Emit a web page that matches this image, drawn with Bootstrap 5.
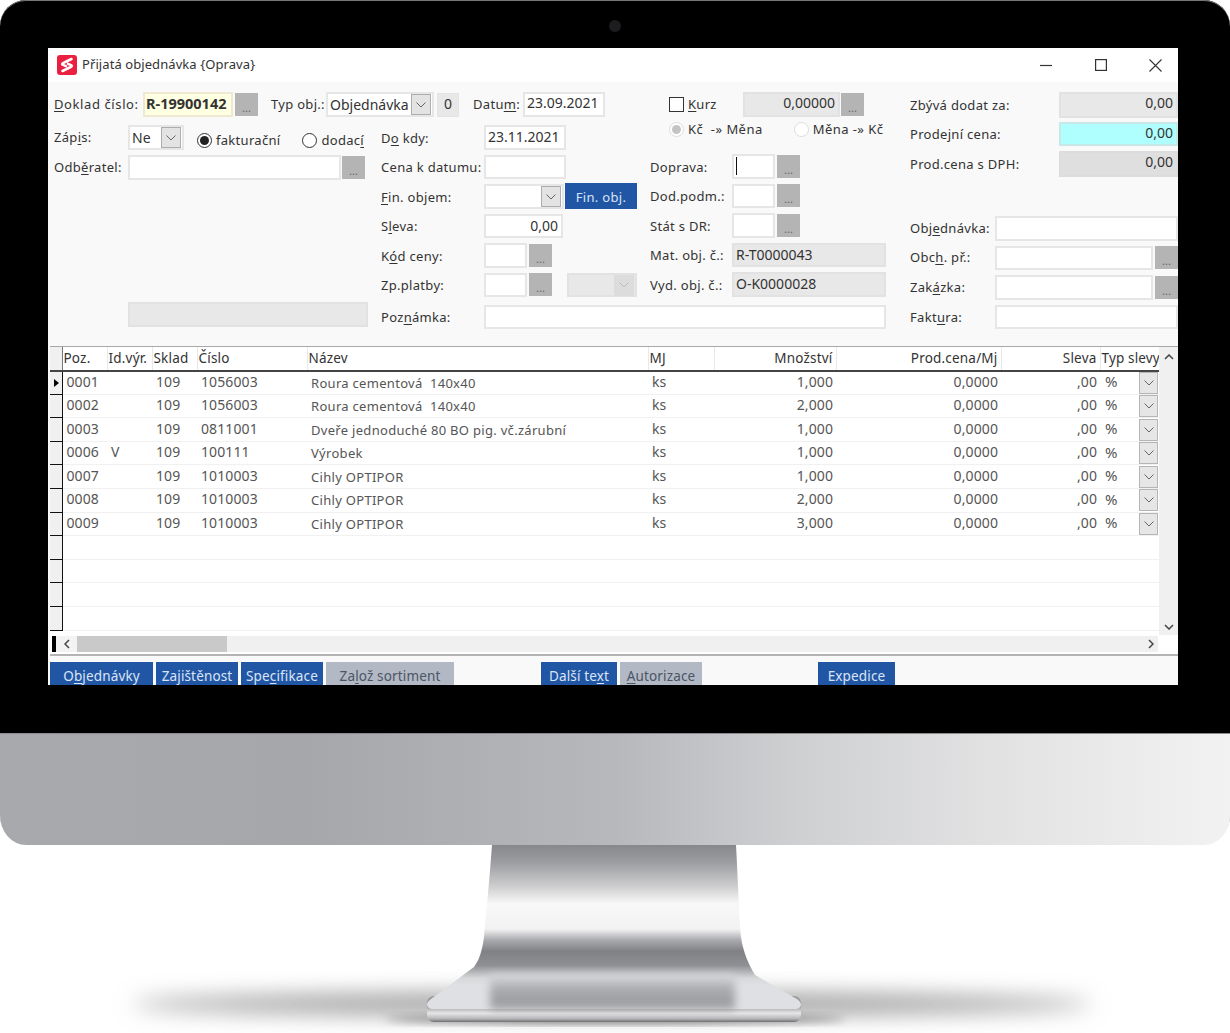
<!DOCTYPE html>
<html lang="cs">
<head>
  <meta charset="UTF-8">
  <title>Přijatá objednávka</title>
  <meta name="viewport" content="width=device-width, initial-scale=1.0">
  <link rel="stylesheet" href="https://cdn.jsdelivr.net/npm/bootstrap@5.3.0/dist/css/bootstrap.min.css">
  <style>
    body { background: #fff; margin: 0; font-family: "Noto Sans", sans-serif; font-size: 13px; color: #333; }
    u { text-underline-offset: 2px; }

    /* monitor */
    .imac { width: 1230px; }
    .bezel { height: 733px; background: #000; border-radius: 26px 26px 0 0; padding: 48px 52px 48px 48px; position: relative; box-shadow: inset 0 1px 0 #777; }
    .camera { position: absolute; left: 609px; top: 20px; width: 12px; height: 12px; border-radius: 50%; background: #1d1d1f; }
    .chin { height: 112px; border-radius: 0 0 26px 26px / 0 0 30px 30px; background: linear-gradient(90deg, #a8a9ad 0%, #a6a7ab 25%, #b7b8bc 50%, #cfd0d2 65%, #e3e3e4 82%, #f2f2f2 100%); box-shadow: inset 0 1px 0 #8a8a8a; }
    .stand { display: block; }

    /* window */
    .app-win { width: 1130px; height: 637px; overflow: hidden; background: #f9f9f9; }
    .title-bar { height: 34px; background: #fff; padding-left: 9px; }
    .title-txt { margin-left: 5px; color: #333; letter-spacing: .08px; }
    .win-btns { margin-right: -4px; }
    .win-ctl { width: 54px; height: 34px; }
    .win-ctl svg { display: block; }
    .ctl-min { margin-right: 1px; }

    .form-top { height: 220px; padding: 10px 0 0 6px; }
    .lbl { white-space: nowrap; color: #333; line-height: 1; letter-spacing: .3px; }
    .frow .lbl { padding-top: 2px; }
    .left-block { width: 583px; }
    .top-row { height: 25px; margin-bottom: 8px; }
    .col-l { width: 314px; }
    .col-m { width: 256px; margin-left: 13px; }
    .mid-block { width: 236px; margin-left: 13px; }
    .right-block { width: 268px; margin-left: 24px; }
    .frow { height: 24.5px; margin-bottom: 5px; }

    .form-control.fld { height: 100%; min-height: 0; padding: 0 1px 0 2px; border: 2px solid #e6e6e6; border-radius: 0; background: #fff; color: #333; font-size: 14px; line-height: 20px; box-shadow: none; }
    .form-control.fld-off { background: #e8e8e8; border-color: #e2e2e2; }
    .form-control.fld-yel { background: #ffffe1; border-color: #eee9d0; font-weight: 700; font-size: 14.5px; padding-left: 1px; }
    .form-control.fld-cyan { background: #b0ffff; border-color: #c8e8e8; }
    .form-control.fld-dark { background: #dfdfdf; border-color: #dcdcdc; }
    .form-control.num { text-align: right; padding-right: 3px; }
    .top-row .form-control.fld, .right-block .form-control.num, .kurz-row .form-control.num { line-height: 18px; }
    .btn.dots { width: 23px; height: 23px; margin-left: 2px; padding: 0; border: 0; border-radius: 0; background: #b4b4b4; color: #666; font-size: 11px; line-height: 30px; flex: none; }
    .chev { width: 20px; height: 21px; margin: auto 0 auto auto; background: #e3e3e3; border: 1px solid #adadad; flex: none; display: flex; align-items: center; justify-content: center; }
    .chev-off { background: #dcdcdc; border-color: #dcdcdc; }

    .lbl.w-doklad-lbl { width: 89px; letter-spacing: .6px; }
    .w-doklad { width: 90px; }
    .w-typ-lbl { width: 55px; margin-left: 13px; }
    .w-typ { width: 108px; }
    .zero { width: 22px; height: 24px; margin-left: 3px; background: #e8e8e8; border: 1px solid #e4e4e4; text-align: center; line-height: 20px; font-size: 14px; }
    .w-dat-lbl { width: 50px; margin-left: 14px; }
    .w-dat { width: 82px; }
    .w-lbl-l { width: 74px; }
    .w-ne { width: 56px; }
    .w-odb { width: 213px; }
    .btn-gap { margin-left: 1px !important; }
    .odb-row { margin-top: 5px; height: 24.5px; }
    .zap-row { height: 25px; }
    .zap-opt { margin-top: 6px; }
    .radio-ico { width: 15px; height: 15px; border-radius: 50%; border: 1px solid #333; background: #fff; flex: none; display: flex; align-items: center; justify-content: center; }
    .radio-dot { width: 9px; height: 9px; border-radius: 50%; background: #222; }
    .radio-off { border-color: #ddd; }
    .radio-off .radio-dot { background: #c4c4c4; }
    .r1 { margin-left: 13px; margin-right: 4px; }
    .r2 { margin-left: 22px; margin-right: 4px; }
    .r3 { margin-left: 19px; margin-right: 4px; }
    .r4 { margin-left: 31px; margin-right: 4px; }
    .w-m-lbl { width: 103px; }
    .w-do { width: 82px; }
    .w-fin { width: 80px; }
    .w-sl { width: 79px; }
    .w-sm { width: 43px; }
    .btn.fin-btn { width: 72px; height: 26px; margin-left: 1px; padding: 2px 0 0; border: 0; border-radius: 0; background: #2156a5; color: #d8e3f4; font-size: 13px; letter-spacing: .3px; }
    .sel-off { width: 70px; margin-left: 15px; height: 100%; }
    .kurz-row { height: 25px; padding-left: 19px; }
    .chk-ico { width: 15px; height: 15px; border: 1px solid #333; background: #fff; margin-right: 4px; flex: none; }
    .kurz-lbl { width: 55px; }
    .w-kurz { width: 97px; }
    .kurz-row .btn.dots { margin-left: 1px; }
    .rad-row { height: 37px; padding-bottom: 12px; }
    .rad-row .lbl { letter-spacing: .45px; }
    .w-r-lbl { width: 82px; }
    .w-wide { width: 154px; }
    .caret-bar { display: block; width: 1px; height: 18px; background: #111; }
    .w-sum-lbl { width: 149px; }
    .w-sum { width: 119px; }
    .sum1 { height: 26px; margin-bottom: 4px; }
    .sum2 { height: 24px; margin-bottom: 5px; }
    .sum3 { height: 26px; margin-bottom: 39px; }
    .w-doc-lbl { width: 85px; }
    .w-doc { width: 183px; }
    .w-doc2 { width: 158px; }
    .doc-row { height: 24.5px; margin-bottom: 5px; }

    .bottom-row { height: 44px; }
    .form-control.fld.off-box { width: 240px; height: 25px; margin-left: 80px; }
    .poz-wrap { margin: 3px 0 0 13px; height: 24px; width: 505px; }
    .w-poz-lbl { width: 103px; }
    .w-poz { width: 402px; }
    .fak-wrap { margin: 3px 0 0 24px; height: 24px; width: 268px; }

    /* grid */
    .grid-wrap { margin-left: 2px; border-top: 1px solid #a8a8a8; height: 289px; background: #fff; }
    .grid-main { width: 1109px; }
    .table.grid-tbl { table-layout: fixed; width: 1109px; margin: 0; --bs-table-bg: transparent; font-size: 14px; letter-spacing: .1px; }
    .table.grid-tbl th, .table.grid-tbl td { padding: 0 3px; white-space: nowrap; overflow: hidden; vertical-align: middle; border: 0; }
    .table.grid-tbl th { height: 23.6px; font-weight: 400; font-size: 13.5px; letter-spacing: .2px; color: #333; padding-left: 1px; border-bottom: 2px solid #444; border-right: 1px solid #e8e8e8; }
    .table.grid-tbl td { height: 23.6px; line-height: 18px; color: #555; border-bottom: 1px solid #f1f1f1; padding: 0 3px 2px 4px; }
    .table.grid-tbl .ind { background: #f0f0f0; border-right: 1px solid #111; border-bottom: 1px solid #111; padding: 0; }
    .table.grid-tbl th.ind { border-bottom: 2px solid #444; border-right: 1px solid #777; }
    .table.grid-tbl .end { text-align: right; padding-right: 3px; padding-left: 0; }
    .table.grid-tbl th.end { padding-right: 3px; }
    .table.grid-tbl .typ-cell { padding: 0 1px 0 5px; font-size: 15px; }
    .table.grid-tbl th.typ-head { padding: 0 0 0 1px; border-right: 0; letter-spacing: .15px; }
    .table.grid-tbl .nm { padding: 0 3px 0 4px; font-size: 13px; letter-spacing: .3px; }
    .pct-sign { margin-bottom: 3px; }
    .row-arrow { width: 0; height: 0; margin-left: 4px; border-left: 5px solid #000; border-top: 4px solid transparent; border-bottom: 4px solid transparent; }
    .c-ind { width: 12px; } .c-poz, .c-id, .c-skl { width: 45px; } .c-cis { width: 110px; } .c-naz { width: 341px; }
    .c-mj { width: 66px; } .c-mn { width: 122px; } .c-pr { width: 165px; } .c-sl { width: 99px; } .c-typ { width: 59px; }
    .pct-box { width: 19px; height: 22px; background: #e6e6e6; border: 1px solid #b5b5b5; display: flex; align-items: center; justify-content: center; }
    .vscroll { width: 19px; background: #f0f0f0; padding: 7px 0 5px; }

    .hscroll { margin-left: 2px; background: #fff; border-bottom: 2px solid #b4b4b4; height: 21px; padding: 1px 0 2px; }
    .hs-mark { width: 4px; background: #000; margin-left: 2px; }
    .hs-left { width: 21px; background: #f3f3f3; }
    .hs-thumb { width: 150px; background: #c9c9c9; }
    .hs-track { width: 931px; background: #f0f0f0; padding-right: 4px; }

    .btn-bar { height: 28px; margin-top: 6px; padding-left: 2px; background: transparent; }
    .btn.act { height: 28px; padding: 0; border: 0; border-radius: 0; color: #dbe5f5; background: #2156a5; font-size: 13.5px; letter-spacing: .15px; margin-right: 3px; flex: none; }
    .btn.act-off { background: #b2b9c4; color: #4c5566; }
    .b-obj { width: 103px; } .b-zaj, .b-spe, .b-aut { width: 82px; } .b-zal { width: 128px; margin-right: 87px !important; }
    .b-dal { width: 76px; } .b-aut { margin-right: 116px !important; } .b-exp { width: 77px; }
  </style>
</head>
<body>
<div class="imac">
  <div class="bezel">
    <span class="camera"></span>
    <div class="app-win">
      <div class="title-bar d-flex align-items-center">
        <svg width="20" height="20" viewBox="0 0 20 20"><rect width="20" height="20" rx="3" fill="#e9203f"/><path d="M14.5 4 6 8.2c-1 .6-1 1.3 0 1.7l3 1.2M5.5 16 14 11.8c1-.6 1-1.3 0-1.7l-3-1.2" fill="none" stroke="#fff" stroke-width="2.6" stroke-linecap="round"/></svg>
        <span class="title-txt">Přijatá objednávka {Oprava}</span>
        <div class="ms-auto d-flex win-btns">
          <div class="win-ctl d-flex align-items-center justify-content-center ctl-min"><svg width="12" height="12" viewBox="0 0 12 12"><path d="M0 6.5h12" stroke="#333" stroke-width="1.2"/></svg></div>
          <div class="win-ctl d-flex align-items-center justify-content-center"><svg width="12" height="12" viewBox="0 0 12 12"><rect x=".6" y=".6" width="10.8" height="10.8" fill="none" stroke="#333" stroke-width="1.2"/></svg></div>
          <div class="win-ctl d-flex align-items-center justify-content-center"><svg width="13" height="13" viewBox="0 0 13 13"><path d="M.5.5l12 12M12.5.5l-12 12" stroke="#333" stroke-width="1.1"/></svg></div>
        </div>
      </div>

      <div class="form-top d-flex">
        <div class="left-block">
          <div class="top-row d-flex align-items-center">
            <span class="lbl w-doklad-lbl"><u>D</u>oklad číslo:</span>
            <div class="form-control fld fld-yel w-doklad">R-19900142</div>
            <button class="btn dots">...</button>
            <span class="lbl w-typ-lbl">Typ obj.:</span>
            <div class="form-control fld w-typ d-flex align-items-center"><span>Objednávka</span><span class="chev"><svg width="10" height="6" viewBox="0 0 10 6"><path d="M.5.5 5 5 9.5.5" fill="none" stroke="#666"/></svg></span></div>
            <div class="zero">0</div>
            <span class="lbl w-dat-lbl">Datu<u>m</u>:</span>
            <div class="form-control fld w-dat">23.09.2021</div>
          </div>
          <div class="d-flex">
            <div class="col-l">
              <div class="zap-row d-flex align-items-center">
                <span class="lbl w-lbl-l">Záp<u>i</u>s:</span>
                <div class="form-control fld w-ne d-flex align-items-center"><span>Ne</span><span class="chev"><svg width="10" height="6" viewBox="0 0 10 6"><path d="M.5.5 5 5 9.5.5" fill="none" stroke="#666"/></svg></span></div>
                <span class="radio-ico r1 zap-opt"><span class="radio-dot"></span></span><span class="lbl zap-opt">fakturační</span>
                <span class="radio-ico r2 zap-opt"></span><span class="lbl zap-opt">dodac<u>í</u></span>
              </div>
              <div class="odb-row d-flex align-items-center">
                <span class="lbl w-lbl-l">Odb<u>ě</u>ratel:</span>
                <div class="form-control fld w-odb"></div>
                <button class="btn dots btn-gap">...</button>
              </div>
            </div>
            <div class="col-m">
              <div class="frow d-flex align-items-center"><span class="lbl w-m-lbl">D<u>o</u> kdy:</span><div class="form-control fld w-do">23.11.2021</div></div>
              <div class="frow d-flex align-items-center"><span class="lbl w-m-lbl">Cena k datumu:</span><div class="form-control fld w-do"></div></div>
              <div class="frow d-flex align-items-center"><span class="lbl w-m-lbl"><u>F</u>in. objem:</span><div class="form-control fld w-fin d-flex align-items-center"><span class="chev"><svg width="10" height="6" viewBox="0 0 10 6"><path d="M.5.5 5 5 9.5.5" fill="none" stroke="#666"/></svg></span></div><button class="btn fin-btn">Fin. obj.</button></div>
              <div class="frow d-flex align-items-center"><span class="lbl w-m-lbl">S<u>l</u>eva:</span><div class="form-control fld num w-sl">0,00</div></div>
              <div class="frow d-flex align-items-center"><span class="lbl w-m-lbl">K<u>ó</u>d ceny:</span><div class="form-control fld w-sm"></div><button class="btn dots">...</button></div>
              <div class="frow d-flex align-items-center"><span class="lbl w-m-lbl">Zp.platby:</span><div class="form-control fld w-sm"></div><button class="btn dots">...</button><div class="form-control fld fld-off sel-off d-flex align-items-center"><span class="chev chev-off"><svg width="10" height="6" viewBox="0 0 10 6"><path d="M.5.5 5 5 9.5.5" fill="none" stroke="#bbb"/></svg></span></div></div>
            </div>
          </div>
        </div>

        <div class="mid-block">
          <div class="kurz-row d-flex align-items-center">
            <span class="chk-ico"></span><span class="lbl kurz-lbl"><u>K</u>urz</span>
            <div class="form-control fld fld-off num w-kurz">0,00000</div>
            <button class="btn dots">...</button>
          </div>
          <div class="rad-row d-flex align-items-center">
            <span class="radio-ico radio-off r3"><span class="radio-dot"></span></span><span class="lbl">Kč&nbsp; -» Měna</span>
            <span class="radio-ico radio-off r4"></span><span class="lbl">Měna -» Kč</span>
          </div>
          <div class="frow d-flex align-items-center"><span class="lbl w-r-lbl">Doprava:</span><div class="form-control fld w-sm d-flex align-items-center"><span class="caret-bar"></span></div><button class="btn dots">...</button></div>
          <div class="frow d-flex align-items-center"><span class="lbl w-r-lbl">Dod.podm.:</span><div class="form-control fld w-sm"></div><button class="btn dots">...</button></div>
          <div class="frow d-flex align-items-center"><span class="lbl w-r-lbl">Stát s DR:</span><div class="form-control fld w-sm"></div><button class="btn dots">...</button></div>
          <div class="frow d-flex align-items-center"><span class="lbl w-r-lbl">Mat. obj. č.:</span><div class="form-control fld fld-off w-wide">R-T0000043</div></div>
          <div class="frow d-flex align-items-center"><span class="lbl w-r-lbl">Vyd. obj. č.:</span><div class="form-control fld fld-off w-wide">O-K0000028</div></div>
        </div>

        <div class="right-block">
          <div class="sum1 d-flex align-items-center"><span class="lbl w-sum-lbl">Zbývá dodat za:</span><div class="form-control fld fld-off num w-sum">0,00</div></div>
          <div class="sum2 d-flex align-items-center"><span class="lbl w-sum-lbl">Prodejní cena:</span><div class="form-control fld fld-cyan num w-sum">0,00</div></div>
          <div class="sum3 d-flex align-items-center"><span class="lbl w-sum-lbl">Prod.cena s DPH:</span><div class="form-control fld fld-dark num w-sum">0,00</div></div>
          <div class="doc-row d-flex align-items-center"><span class="lbl w-doc-lbl">Obj<u>e</u>dnávka:</span><div class="form-control fld w-doc"></div></div>
          <div class="doc-row d-flex align-items-center"><span class="lbl w-doc-lbl">Obc<u>h</u>. př.:</span><div class="form-control fld w-doc2"></div><button class="btn dots">...</button></div>
          <div class="doc-row d-flex align-items-center"><span class="lbl w-doc-lbl">Zak<u>á</u>zka:</span><div class="form-control fld w-doc2"></div><button class="btn dots">...</button></div>
        </div>
      </div>

      <div class="bottom-row d-flex align-items-start">
        <div class="form-control fld fld-off off-box"></div>
        <div class="poz-wrap d-flex align-items-center"><span class="lbl w-poz-lbl">Poz<u>n</u>ámka:</span><div class="form-control fld w-poz"></div></div>
        <div class="fak-wrap d-flex align-items-center"><span class="lbl w-doc-lbl">Fakt<u>u</u>ra:</span><div class="form-control fld w-doc"></div></div>
      </div>

      <div class="grid-wrap d-flex">
        <div class="grid-main">
          <table class="table grid-tbl">
            <colgroup><col class="c-ind"><col class="c-poz"><col class="c-id"><col class="c-skl"><col class="c-cis"><col class="c-naz"><col class="c-mj"><col class="c-mn"><col class="c-pr"><col class="c-sl"><col class="c-typ"></colgroup>
            <thead>
              <tr><th class="ind"></th><th>Poz.</th><th>Id.výr.</th><th>Sklad</th><th>Číslo</th><th>Název</th><th>MJ</th><th class="end">Množství</th><th class="end">Prod.cena/Mj</th><th class="end">Sleva</th><th class="typ-head">Typ slevy</th></tr>
            </thead>
            <tbody id="gridBody"></tbody>
          </table>
        </div>
        <div class="vscroll d-flex flex-column justify-content-between align-items-center">
          <svg width="10" height="6" viewBox="0 0 10 6"><path d="M1 5 5 1l4 4" fill="none" stroke="#444" stroke-width="1.5"/></svg>
          <svg width="10" height="6" viewBox="0 0 10 6"><path d="M1 1l4 4 4-4" fill="none" stroke="#444" stroke-width="1.5"/></svg>
        </div>
      </div>

      <div class="hscroll d-flex">
        <div class="hs-mark"></div>
        <div class="hs-left d-flex align-items-center justify-content-center"><svg width="6" height="10" viewBox="0 0 6 10"><path d="M5 1 1 5l4 4" fill="none" stroke="#444" stroke-width="1.5"/></svg></div>
        <div class="hs-thumb"></div>
        <div class="hs-track d-flex align-items-center justify-content-end"><svg width="6" height="10" viewBox="0 0 6 10"><path d="M1 1l4 4-4 4" fill="none" stroke="#444" stroke-width="1.5"/></svg></div>
      </div>

      <div class="btn-bar d-flex">
        <button class="btn act b-obj">O<u>b</u>jednávky</button>
        <button class="btn act b-zaj">Za<u>j</u>ištěnost</button>
        <button class="btn act b-spe">Spe<u>c</u>ifikace</button>
        <button class="btn act act-off b-zal">Za<u>l</u>ož sortiment</button>
        <button class="btn act b-dal">Další te<u>x</u>t</button>
        <button class="btn act act-off b-aut"><u>A</u>utorizace</button>
        <button class="btn act b-exp">Expedice</button>
      </div>
    </div>
  </div>
  <div class="chin"></div>
  <svg class="stand" width="1230" height="188" viewBox="0 845 1230 188">
    <defs>
      <linearGradient id="neck" x1="0" y1="845" x2="0" y2="985" gradientUnits="userSpaceOnUse">
        <stop offset="0" stop-color="#87888c"/>
        <stop offset=".12" stop-color="#9b9c9f"/>
        <stop offset=".3" stop-color="#cfcfd1"/>
        <stop offset=".42" stop-color="#f8f8f8"/>
        <stop offset=".6" stop-color="#f2f2f3"/>
        <stop offset=".68" stop-color="#a9aaad"/>
        <stop offset=".76" stop-color="#808185"/>
        <stop offset=".86" stop-color="#8f9094"/>
        <stop offset=".95" stop-color="#d6d7d9"/>
        <stop offset="1" stop-color="#dfe0e3"/>
      </linearGradient>
      <linearGradient id="refl" x1="0" y1="975" x2="0" y2="1012" gradientUnits="userSpaceOnUse">
        <stop offset="0" stop-color="#d9dadc"/>
        <stop offset=".4" stop-color="#a8a9ad"/>
        <stop offset="1" stop-color="#97989c"/>
      </linearGradient>
      <linearGradient id="edge" x1="0" y1="1006" x2="0" y2="1022" gradientUnits="userSpaceOnUse">
        <stop offset="0" stop-color="#9a9a9d"/>
        <stop offset=".45" stop-color="#e6e6e8"/>
        <stop offset=".8" stop-color="#b5b5b8"/>
        <stop offset="1" stop-color="#6e6e70"/>
      </linearGradient>
      <filter id="b12" x="-20%" y="-100%" width="140%" height="300%"><feGaussianBlur stdDeviation="11"/></filter>
      <filter id="b4" x="-20%" y="-50%" width="140%" height="200%"><feGaussianBlur stdDeviation="4"/></filter>
    </defs>
    <ellipse cx="612" cy="1004" rx="480" ry="11" fill="#999" filter="url(#b12)"/>
    <ellipse cx="615" cy="1019" rx="230" ry="4" fill="#777" filter="url(#b4)"/>
    <rect x="427" y="996" width="374" height="26" rx="7" fill="url(#edge)"/>
    <path d="M492 845C489 885 486 915 484 937C482 952 479 960 474 967L431 999Q427 1002 427 1005Q428 1009 433 1009H795Q800 1009 801 1005Q801 1002 797 999L755 975C749 965 743 952 741 937C739 915 738 880 736 845Z" fill="url(#neck)"/>
    <rect x="490" y="975" width="245" height="34" fill="url(#refl)" filter="url(#b4)"/>
  </svg>
</div>
<script>
  const rows = [
    ['0001','', '109','1056003','Roura cementová&nbsp; 140x40','1,000'],
    ['0002','', '109','1056003','Roura cementová&nbsp; 140x40','2,000'],
    ['0003','', '109','0811001','Dveře jednoduché 80 BO pig. vč.zárubní','1,000'],
    ['0006','V','109','100111','Výrobek','1,000'],
    ['0007','', '109','1010003','Cihly OPTIPOR','1,000'],
    ['0008','', '109','1010003','Cihly OPTIPOR','2,000'],
    ['0009','', '109','1010003','Cihly OPTIPOR','3,000']
  ];
  const chev = '<span class="pct-box"><svg width="10" height="6" viewBox="0 0 10 6"><path d="M.5.5 5 5 9.5.5" fill="none" stroke="#666"/></svg></span>';
  let html = '';
  rows.forEach((r, i) => {
    html += `<tr><td class="ind">${i === 0 ? '<div class="row-arrow"></div>' : ''}</td><td>${r[0]}</td><td>${r[1]}</td><td>${r[2]}</td><td>${r[3]}</td><td class="nm">${r[4]}</td><td>ks</td><td class="end">${r[5]}</td><td class="end">0,0000</td><td class="end">,00</td><td class="typ-cell"><div class="d-flex align-items-center justify-content-between"><span class="pct-sign">%</span>${chev}</div></td></tr>`;
  });
  for (let i = 0; i < 4; i++) {
    html += '<tr><td class="ind"></td><td></td><td></td><td></td><td></td><td></td><td></td><td></td><td></td><td></td><td></td></tr>';
  }
  document.getElementById('gridBody').innerHTML = html;
</script>
<script src="https://cdn.jsdelivr.net/npm/bootstrap@5.3.0/dist/js/bootstrap.bundle.min.js"></script>
</body>
</html>
